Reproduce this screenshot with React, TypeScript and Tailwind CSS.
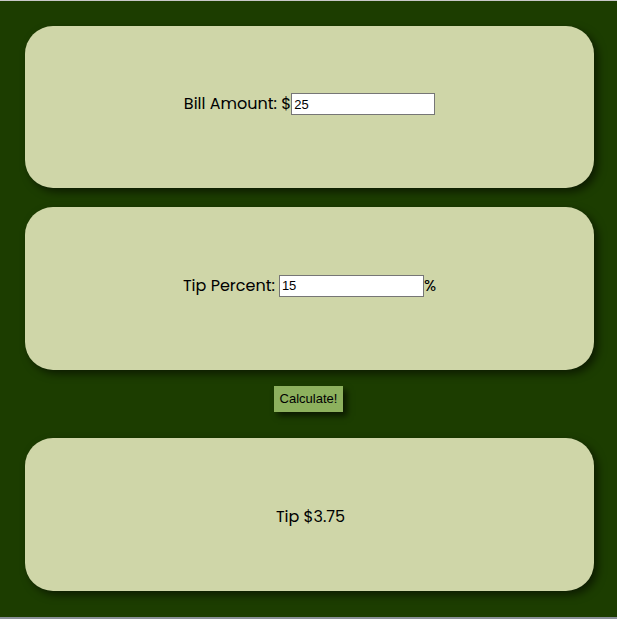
const font = { fontFamily: "Poppins, 'Open Sans', sans-serif" };

const Card = ({ h, children }: { h: string; children: React.ReactNode }) => (
  <div
    className={`ml-[25px] w-[569px] ${h} rounded-[28px] bg-[#cfd6a8] shadow-[4px_4px_8px_rgba(0,0,0,0.55)] flex items-center justify-center text-[16px] text-black`}
    style={font}
  >
    {children}
  </div>
);

export default function App() {
  return (
    <div className="h-[619px] bg-[#1c3d00] border-t border-[#c8c8c8] border-b-2 border-b-[#8a9099] pt-[25px]">
      <Card h="h-[162px]">
        <div className="flex items-center mt-[-6px]">
          <span>Bill Amount: $</span>
          <input
            defaultValue="25"
            className="w-[144px] h-[22px] bg-white border border-[#767676] px-[2px] text-[13px] font-['Liberation_Sans',Arial,sans-serif] outline-none"
          />
        </div>
      </Card>
      <div className="h-[19px]" />
      <Card h="h-[163px]">
        <div className="flex items-center mt-[-6px]">
          <span className="mr-[4px]">Tip Percent:</span>
          <input
            defaultValue="15"
            className="w-[145px] h-[22px] bg-white border border-[#767676] px-[2px] text-[13px] font-['Liberation_Sans',Arial,sans-serif] outline-none"
          />
          <span>%</span>
        </div>
      </Card>
      <div className="flex justify-center pt-[16px] pb-[26px]">
        <button className="h-[26px] px-[6px] bg-[#8db15e] text-[13px] text-black font-['Liberation_Sans',Arial,sans-serif] shadow-[4px_4px_6px_rgba(0,0,0,0.6)]">
          Calculate!
        </button>
      </div>
      <Card h="h-[153px]">
        <span className="mt-[4px] ml-[2px]">Tip $3.75</span>
      </Card>
    </div>
  );
}
